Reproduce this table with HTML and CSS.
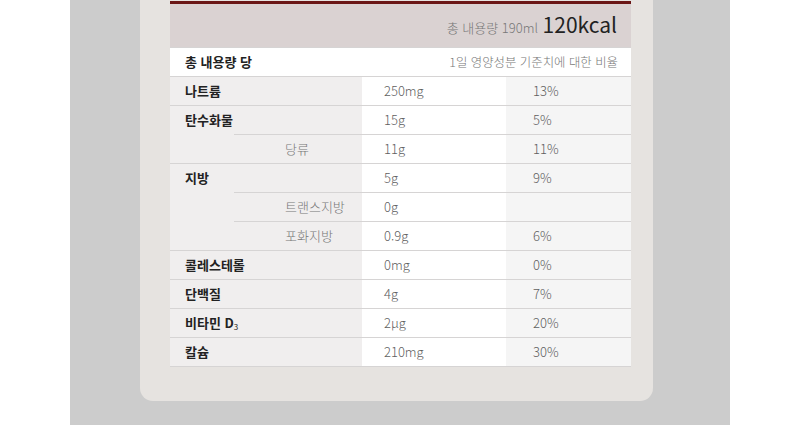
FILE: index.html
```html
<!DOCTYPE html>
<html lang="ko">
<head>
<meta charset="utf-8">
<link rel="stylesheet" href="styles.css">
</head>
<body>
<div class="stage">
  <div class="panel">
    <table class="nutri">
      <colgroup>
        <col class="c1"><col class="c2"><col class="c3"><col class="c4">
      </colgroup>
      <tr class="head">
        <td colspan="4"><span class="vol">총 내용량 190ml</span> <span class="kcal">120kcal</span></td>
      </tr>
      <tr class="per">
        <td colspan="2" class="name">총 내용량 당</td>
        <td colspan="2" class="ratio">1일 영양성분 기준치에 대한 비율</td>
      </tr>
      <tr>
        <td colspan="2" class="name">나트륨</td><td class="val">250mg</td><td class="pct">13%</td>
      </tr>
      <tr>
        <td rowspan="2" class="name">탄수화물</td><td class="sub"></td><td class="val">15g</td><td class="pct">5%</td>
      </tr>
      <tr>
        <td class="sub">당류</td><td class="val">11g</td><td class="pct">11%</td>
      </tr>
      <tr>
        <td rowspan="3" class="name">지방</td><td class="sub"></td><td class="val">5g</td><td class="pct">9%</td>
      </tr>
      <tr>
        <td class="sub">트랜스지방</td><td class="val">0g</td><td class="pct"></td>
      </tr>
      <tr>
        <td class="sub">포화지방</td><td class="val">0.9g</td><td class="pct">6%</td>
      </tr>
      <tr>
        <td colspan="2" class="name">콜레스테롤</td><td class="val">0mg</td><td class="pct">0%</td>
      </tr>
      <tr>
        <td colspan="2" class="name">단백질</td><td class="val">4g</td><td class="pct">7%</td>
      </tr>
      <tr>
        <td colspan="2" class="name">비타민 D<sub>3</sub></td><td class="val">2μg</td><td class="pct">20%</td>
      </tr>
      <tr class="last">
        <td colspan="2" class="name">칼슘</td><td class="val">210mg</td><td class="pct">30%</td>
      </tr>
    </table>
  </div>
</div>
</body>
</html>
```

FILE: styles.css
```css
html, body {
  margin: 0;
  padding: 0;
  background: #ffffff;
}
body {
  font-family: "Noto Sans CJK KR", "Noto Sans", sans-serif;
  width: 800px;
  height: 425px;
  overflow: hidden;
}
.stage {
  margin-left: 70px;
  width: 660px;
  height: 425px;
  background: #cccccc;
}
.panel {
  margin-left: 70px;
  width: 461px;
  padding: 1px 22px 34px 30px;
  background: #e6e3e0;
  border-radius: 0 0 13px 13px;
}
.nutri {
  width: 461px;
  table-layout: fixed;
  border-collapse: collapse;
  border-top: 3px solid #6a1616;
  font-size: 13px;
  color: #5f5f5f;
}
.c1 { width: 64px; }
.c2 { width: 128px; }
.c3 { width: 144px; }
.c4 { width: 125px; }
.nutri td {
  height: 28px;
  padding: 0;
  border-top: 1px solid #d6d4d4;
  white-space: nowrap;
  overflow: visible;
  vertical-align: middle;
  line-height: 16px;
}
.nutri tr.last td {
  border-bottom: 1px solid #d6d4d4;
}
.nutri tr.head td {
  height: 43px;
  border-top: 0;
  background: #dad2d2;
  text-align: right;
  padding-right: 14px;
}
.vol {
  font-size: 13px;
  color: #777;
  font-weight: 300;
}
.kcal {
  font-size: 21px;
  color: #222;
  font-weight: 400;
  margin-left: 1px;
}
.nutri tr.per td {
  background: #ffffff;
}
.nutri td.name {
  background: #f0eeee;
  color: #222;
  font-weight: 700;
  padding-left: 15px;
  vertical-align: top;
  padding-top: 6px;
  height: 22px;
}
.nutri tr.per td.name {
  background: #ffffff;
}
.nutri td.ratio {
  text-align: right;
  padding-right: 13px;
  color: #777;
  font-weight: 300;
  font-size: 12.4px;
}
.nutri td.sub {
  background: #f0eeee;
  padding-left: 51px;
  color: #777;
  font-weight: 300;
}
.nutri td.val {
  background: #ffffff;
  padding-left: 22px;
  font-weight: 300;
}
.nutri td.pct {
  background: #f5f5f5;
  padding-left: 27px;
  font-weight: 300;
}
sub {
  font-size: 8px;
  vertical-align: -2px;
  font-weight: 400;
  line-height: 0;
}
```
